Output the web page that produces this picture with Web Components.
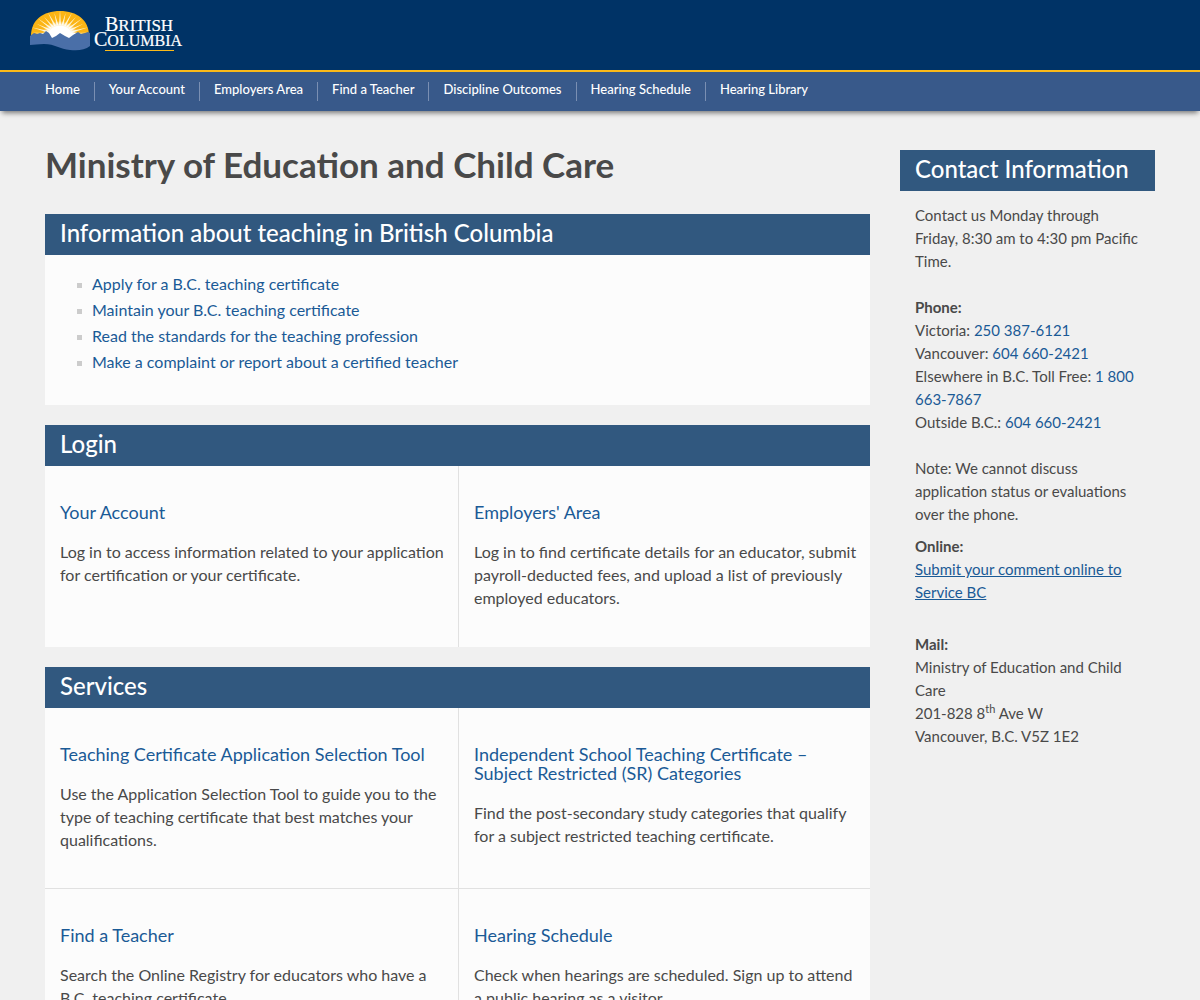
<!DOCTYPE html>
<html lang="en">
<head>
<meta charset="utf-8">
<meta name="viewport" content="width=device-width, initial-scale=1">
<title>Ministry of Education and Child Care</title>
<style>
html { background: #f0f0f0; }
body { margin: 0; font: 16px/23px Lato, "Noto Sans", sans-serif; color: #494949; }
main, aside { box-sizing: border-box; padding: 0 15px; }
main { width: 75%; }
aside { width: 25%; }
.columns { display: flex; padding: 36px 30px 0; }
aside { padding-top: 3px; }
h1 { margin: 0 0 32px; font-size: 35px; line-height: 35px; font-weight: 700; }
a { color: #1a5a96; text-decoration: none; }
site-nav a { color: #fff; }
info-panel { margin-bottom: 20px; }
link-list { padding: 16px 47px 30px; }
contact-details { font-size: 15px; }
contact-details p { margin: 0 0 9px; }
contact-details a.underlined { text-decoration: underline; }
contact-details .online { margin-bottom: 29px; }
sup { font-size: 11px; line-height: 0; }
</style>
<script>
function defineElement(name, markup) {
  const template = document.createElement('template');
  template.innerHTML = markup;
  customElements.define(name, class extends HTMLElement {
    constructor() {
      super();
      this.attachShadow({ mode: 'open' }).append(template.content.cloneNode(true));
    }
  });
}

// Sun rays: narrow wedges fanned over the upper half of the dome.
function sunRays() {
  let d = '';
  for (let angle = 6; angle < 180; angle += 12) {
    const point = (a, r) => {
      const t = a * Math.PI / 180;
      return (60 - Math.cos(t) * r).toFixed(1) + ' ' + (35 - Math.sin(t) * r * 0.83).toFixed(1);
    };
    const length = (angle / 12 | 0) % 2 ? 30 : 27;
    d += `M${point(angle - 5, 12)}L${point(angle, length)}L${point(angle + 5, 12)}Z`;
  }
  return d;
}

defineElement('bc-logo', `
<style>
:host { display: block; }
a, svg { display: block; }
text { font-family: "Liberation Serif", serif; fill: #fff; stroke: #fff; stroke-width: .2; }
</style>
<a href="#" aria-label="British Columbia">
<svg width="156" height="60" viewBox="30 0 156 60">
  <defs>
    <clipPath id="dome"><path d="M31 36C31 20 43 11 60 11S89 20 89 36Z"/></clipPath>
    <radialGradient id="glow"><stop offset="0.6" stop-color="#fff"/><stop offset="1" stop-color="#fff" stop-opacity="0"/></radialGradient>
  </defs>
  <g clip-path="url(#dome)">
    <rect x="30" y="10" width="60" height="28" fill="#fcb514"/>
    <path d="${sunRays()}" fill="#fff4cf"/>
    <ellipse cx="60" cy="34" rx="18" ry="13" fill="url(#glow)"/>
  </g>
  <path d="M45 33L60 30L76 33L72 38H49Z" fill="#fff"/>
  <path d="M30 36L34 33L37 34L40 33L43 34L46 31L49 33L52 38L56 36L60 33L65 36L69 38L73 35L78 32L81 34L85 33L88 32L90 33V46C85 50 78 51 70 50C60 49 55 44 44 44C38 44 34 45 30 45Z" fill="#4a6fa8"/>
  <text x="105" y="31" font-size="20">B<tspan font-size="17">RITISH</tspan></text>
  <text x="94" y="46" font-size="20">C<tspan font-size="16">OLUMBIA</tspan></text>
  <rect x="105" y="50" width="69" height="1" fill="#fcba19"/>
</svg>
</a>`);

defineElement('site-header', `
<style>
:host { display: block; background: #036; border-bottom: 2px solid #fcba19; padding: 0 30px 10px; }
</style>
<bc-logo></bc-logo>`);

defineElement('site-nav', `
<style>
:host { display: block; background: #38598a; padding: 10px 31px; box-shadow: 0 4px 5px -2px #777; }
nav { display: flex; flex-wrap: wrap; }
::slotted(a) { font-size: 13px; line-height: 15px; padding: 0 14px 4px; font-weight: 500; border-left: 1px solid #7a8fb3; }
::slotted(a:first-child) { border-left: 0; }
</style>
<nav aria-label="Main"><slot></slot></nav>`);

defineElement('info-panel', `
<style>
:host { display: block; }
header { background: #31587f; color: #fff; padding: 5px 15px 8px; }
::slotted(h2) { margin: 0; font-size: 24px; line-height: 28px; font-weight: 500; }
.body { background: #fcfcfc; }
:host([plain]) .body { background: none; padding: 13px 15px; }
</style>
<section><header><slot name="title"></slot></header><div class="body"><slot></slot></div></section>`);

defineElement('link-list', `
<style>
:host { display: block; }
ul { list-style: none; margin: 0; padding: 0; }
li { display: flex; align-items: center; line-height: 26px; }
li::before { content: ""; width: 5px; height: 5px; background: #ccc; margin: 2px 10px 0 -15px; }
a { color: #1a5a96; text-decoration: none; }
</style>
<ul></ul>`);

defineElement('card-grid', `
<style>
:host { display: grid; grid-template-columns: 414fr 411fr; }
</style>
<slot></slot>`);

defineElement('link-card', `
<style>
:host { display: block; box-sizing: border-box; min-height: 181px; padding: 37px 8px 20px 15px; }
:host(:nth-child(odd)) { border-right: 1px solid #e1e1e1; }
:host([ruled]) { border-bottom: 1px solid #e1e1e1; }
::slotted(h3) { margin: 0 0 18px; font-size: 18px; line-height: 19px; font-weight: 400; }
::slotted(p) { margin: 0; }
</style>
<slot></slot>`);

defineElement('contact-details', '<style>:host { display: block; }</style><slot></slot>');
</script>
</head>
<body>
<site-header></site-header>
<site-nav>
<a href="#">Home</a><a href="#">Your Account</a><a href="#">Employers Area</a><a href="#">Find a Teacher</a><a href="#">Discipline Outcomes</a><a href="#">Hearing Schedule</a><a href="#">Hearing Library</a>
</site-nav>
<div class="columns">
<main>
<h1>Ministry of Education and Child Care</h1>
<info-panel>
<h2 slot="title">Information about teaching in British Columbia</h2>
<link-list></link-list>
</info-panel>
<info-panel>
<h2 slot="title">Login</h2>
<card-grid>
<link-card><h3><a href="#">Your Account</a></h3><p>Log in to access information related to your application for certification or your certificate.</p></link-card>
<link-card><h3><a href="#">Employers' Area</a></h3><p>Log in to find certificate details for an educator, submit payroll-deducted fees, and upload a list of previously employed educators.</p></link-card>
</card-grid>
</info-panel>
<info-panel>
<h2 slot="title">Services</h2>
<card-grid>
<link-card ruled><h3><a href="#">Teaching Certificate Application Selection Tool</a></h3><p>Use the Application Selection Tool to guide you to the type of teaching certificate that best matches your qualifications.</p></link-card>
<link-card ruled><h3><a href="#">Independent School Teaching Certificate – Subject Restricted (SR) Categories</a></h3><p>Find the post-secondary study categories that qualify for a subject restricted teaching certificate.</p></link-card>
<link-card><h3><a href="#">Find a Teacher</a></h3><p>Search the Online Registry for educators who have a B.C. teaching certificate.</p></link-card>
<link-card><h3><a href="#">Hearing Schedule</a></h3><p>Check when hearings are scheduled. Sign up to attend a public hearing as a visitor.</p></link-card>
</card-grid>
</info-panel>
</main>
<aside>
<info-panel plain>
<h2 slot="title">Contact Information</h2>
<contact-details>
<p>Contact us Monday through Friday, 8:30 am to 4:30 pm Pacific Time.<br><br><strong>Phone:</strong><br>Victoria: <a href="#">250 387-6121</a><br>Vancouver: <a href="#">604 660-2421</a><br>Elsewhere in B.C. Toll Free: <a href="#">1 800 663-7867</a><br>Outside B.C.: <a href="#">604 660-2421</a><br><br>Note: We cannot discuss application status or evaluations over the phone.</p>
<p class="online"><strong>Online:</strong><br><a class="underlined" href="#">Submit your comment online to Service BC</a></p>
<p><strong>Mail:</strong><br>Ministry of Education and Child Care<br>201-828 8<sup>th</sup> Ave W<br>Vancouver, B.C. V5Z 1E2</p>
</contact-details>
</info-panel>
</aside>
</div>
<script>
const list = document.querySelector('link-list').shadowRoot.querySelector('ul');
for (const label of [
  'Apply for a B.C. teaching certificate',
  'Maintain your B.C. teaching certificate',
  'Read the standards for the teaching profession',
  'Make a complaint or report about a certified teacher'
]) {
  const item = document.createElement('li');
  const link = document.createElement('a');
  link.href = '#';
  link.textContent = label;
  item.append(link);
  list.append(item);
}
</script>
</body>
</html>
